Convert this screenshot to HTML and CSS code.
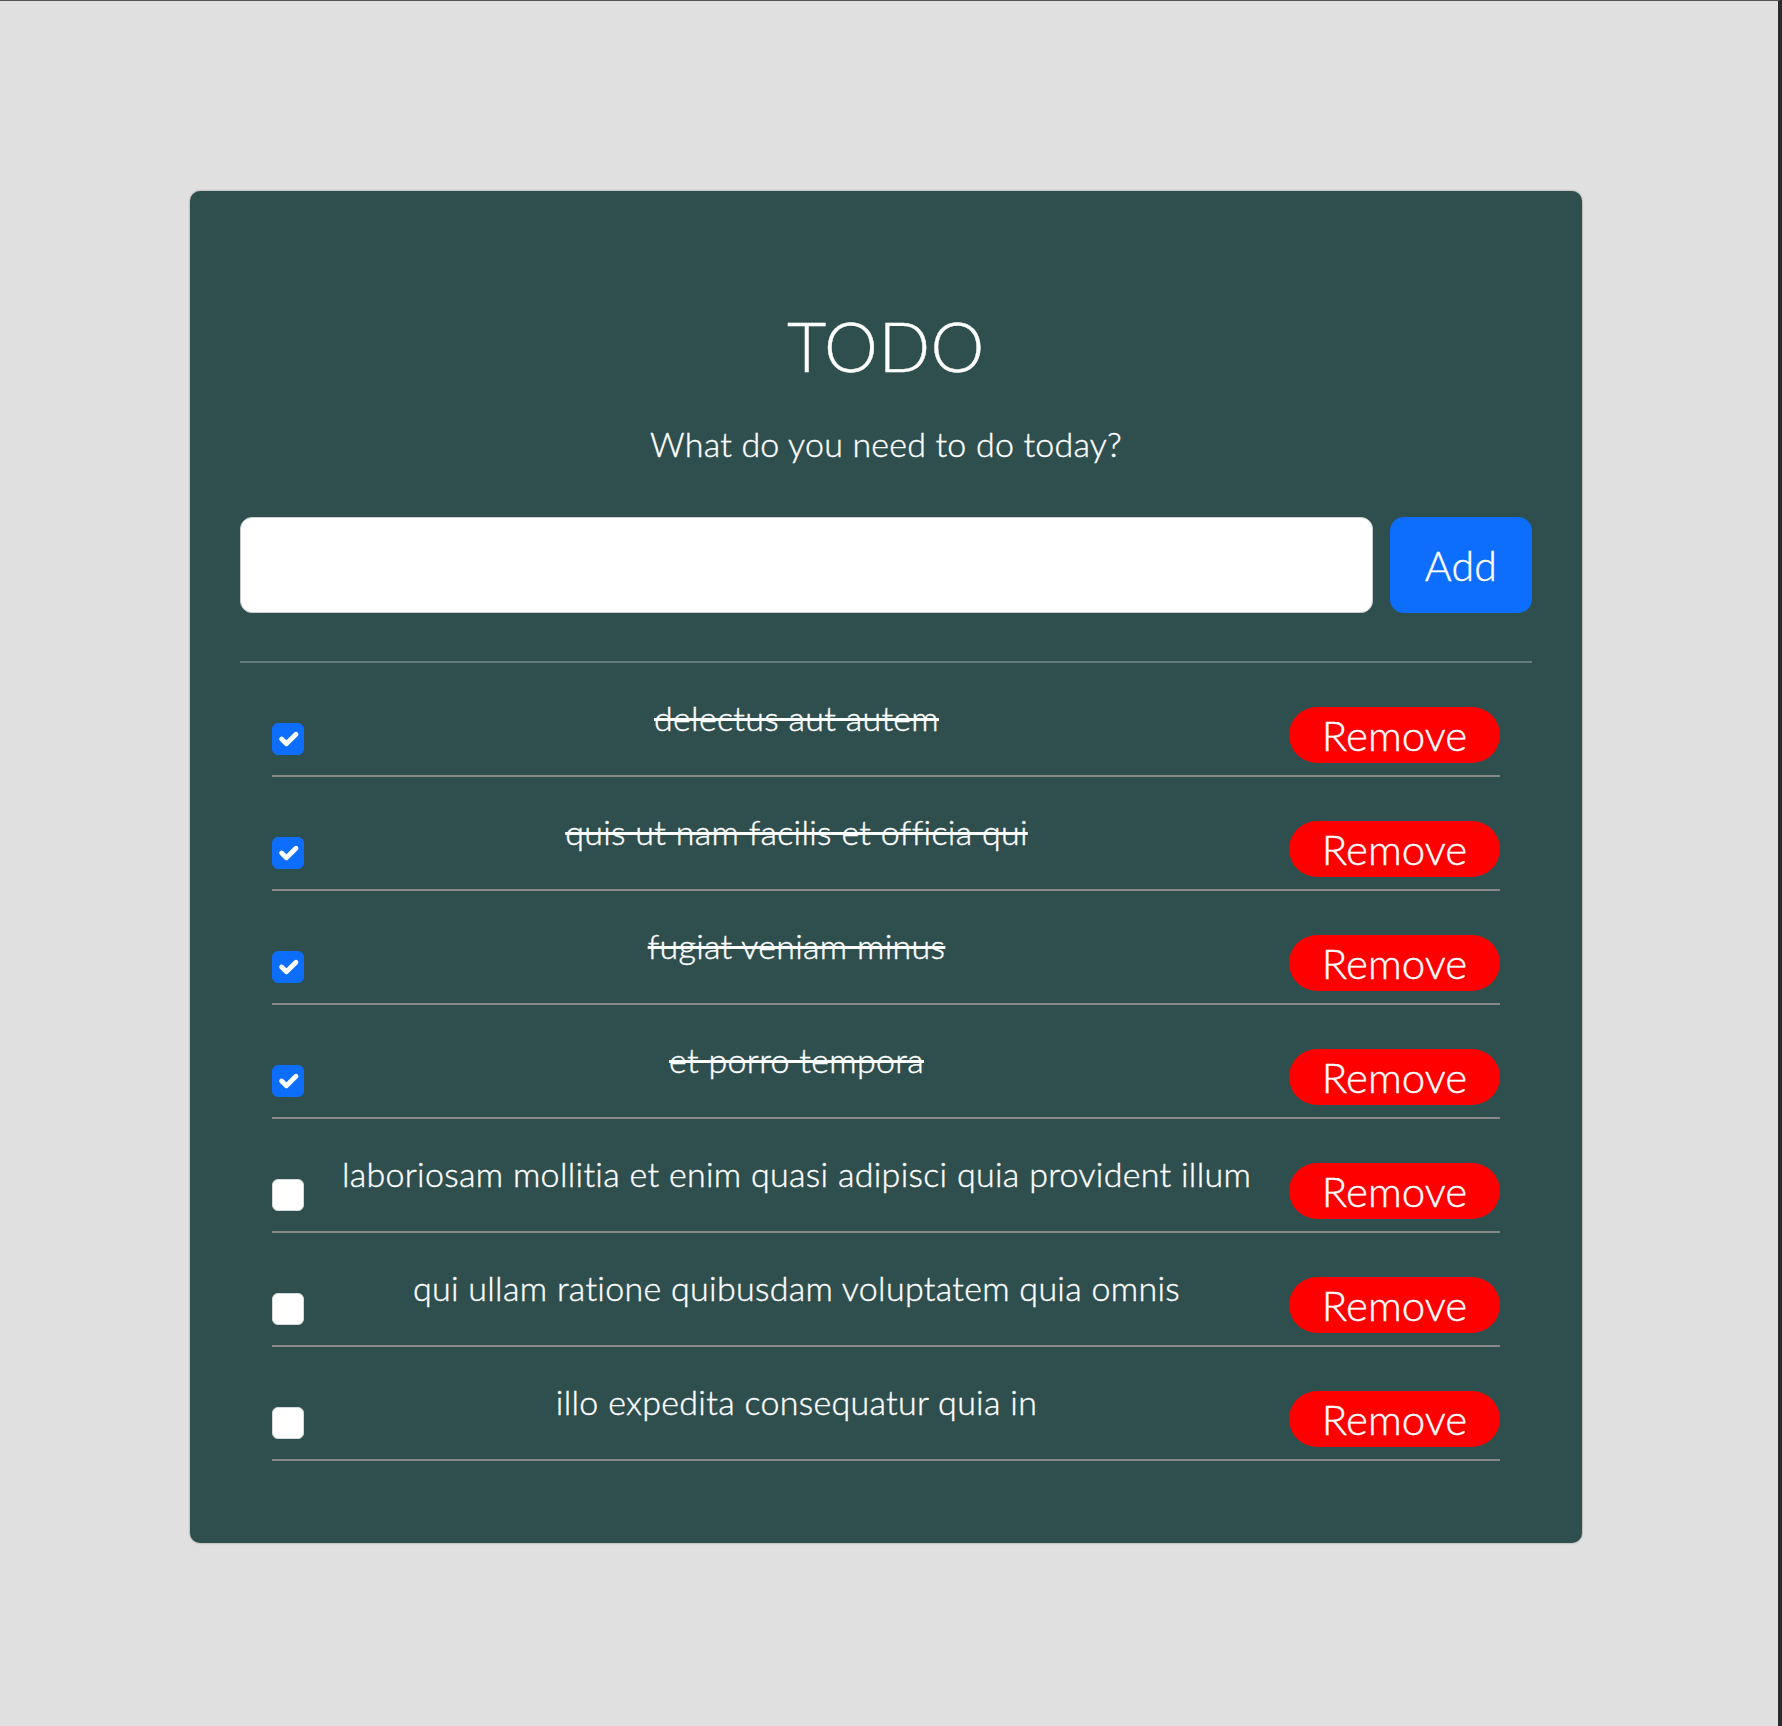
FILE: index.html
```html
<!DOCTYPE html>
<html lang="en">
<head>
<meta charset="utf-8">
<title>TODO</title>
<link rel="stylesheet" href="styles.css">
</head>
<body>
<main class="card">
  <h1 class="title">TODO</h1>
  <p class="subtitle">What do you need to do today?</p>
  <form class="add-form">
    <input class="add-input" type="text" aria-label="New todo">
    <button class="add-btn" type="button">Add</button>
  </form>
  <hr class="divider">
  <ul class="list">
    <li class="item done">
      <span class="box checked"><svg viewBox="0 0 20 20" width="32" height="32"><path d="m6 10 3 3 6-6" fill="none" stroke="#fff" stroke-width="3" stroke-linecap="round" stroke-linejoin="round"/></svg></span>
      <span class="text">delectus aut autem</span>
      <button class="remove" type="button">Remove</button>
    </li>
    <li class="item done">
      <span class="box checked"><svg viewBox="0 0 20 20" width="32" height="32"><path d="m6 10 3 3 6-6" fill="none" stroke="#fff" stroke-width="3" stroke-linecap="round" stroke-linejoin="round"/></svg></span>
      <span class="text">quis ut nam facilis et officia qui</span>
      <button class="remove" type="button">Remove</button>
    </li>
    <li class="item done">
      <span class="box checked"><svg viewBox="0 0 20 20" width="32" height="32"><path d="m6 10 3 3 6-6" fill="none" stroke="#fff" stroke-width="3" stroke-linecap="round" stroke-linejoin="round"/></svg></span>
      <span class="text">fugiat veniam minus</span>
      <button class="remove" type="button">Remove</button>
    </li>
    <li class="item done">
      <span class="box checked"><svg viewBox="0 0 20 20" width="32" height="32"><path d="m6 10 3 3 6-6" fill="none" stroke="#fff" stroke-width="3" stroke-linecap="round" stroke-linejoin="round"/></svg></span>
      <span class="text">et porro tempora</span>
      <button class="remove" type="button">Remove</button>
    </li>
    <li class="item">
      <span class="box"></span>
      <span class="text">laboriosam mollitia et enim quasi adipisci quia provident illum</span>
      <button class="remove" type="button">Remove</button>
    </li>
    <li class="item">
      <span class="box"></span>
      <span class="text">qui ullam ratione quibusdam voluptatem quia omnis</span>
      <button class="remove" type="button">Remove</button>
    </li>
    <li class="item">
      <span class="box"></span>
      <span class="text">illo expedita consequatur quia in</span>
      <button class="remove" type="button">Remove</button>
    </li>
  </ul>
</main>
</body>
</html>
```

FILE: styles.css
```css
* { box-sizing: border-box; }

html {
  background: #e0e0e0;
}

body {
  margin: 0;
  min-height: 100vh;
  border-top: 1px solid #555;
  border-right: 4px solid #2b2b2b;
  font-family: "Lato", "Open Sans", sans-serif;
  font-weight: 300;
  color: #fff;
  -webkit-text-stroke: 0.4px currentColor;
  padding: 190px 0 183px 190px;
}

.card {
  width: 1392px;
  background: #2f4f4f;
  border-radius: 10px;
  box-shadow: 0 0 2px rgba(0, 0, 0, 0.45);
  padding: 114px 50px 82px;
}

.title {
  margin: 0;
  font-size: 68px;
  font-weight: 300;
  line-height: 1.2;
  letter-spacing: 0.5px;
  text-align: center;
}

.subtitle {
  margin: 37px 0 0;
  font-size: 34px;
  line-height: 1.2;
  letter-spacing: 0.2px;
  text-align: center;
}

.add-form {
  display: flex;
  gap: 17px;
  margin-top: 53px;
  height: 96px;
}

.add-input {
  flex: 1;
  height: 96px;
  border: 1px solid #c9cdd1;
  border-radius: 12px;
  background: #fff;
  font-family: inherit;
  font-size: 32px;
  padding: 0 20px;
}

.add-btn {
  width: 142px;
  height: 96px;
  border: none;
  border-radius: 14px;
  background: #0d6efd;
  color: #fff;
  font-family: inherit;
  font-weight: 300;
  font-size: 41px;
  letter-spacing: 0.3px;
  padding: 0;
}

.divider {
  margin: 48px 0 0;
  border: none;
  border-top: 2px solid rgba(255, 255, 255, 0.25);
}

.list {
  list-style: none;
  margin: 0 32px;
  padding: 0;
}

.item {
  display: flex;
  align-items: flex-start;
  padding: 35px 0 12px;
  border-bottom: 2px solid #888;
}

.box {
  flex: none;
  width: 32px;
  height: 32px;
  margin-top: 25px;
  border-radius: 6px;
  background: #fff;
  border: 1px solid #d4d8dc;
  display: block;
}

.box svg {
  display: block;
  margin: -1px;
}

.box.checked {
  background: #0d6efd;
  border-color: #0d6efd;
}

.text {
  flex: 1;
  text-align: center;
  font-size: 34px;
  line-height: 1.2;
  letter-spacing: 0.3px;
  padding: 0 10px;
}

.done .text {
  text-decoration: line-through;
}

.remove {
  flex: none;
  margin-top: 9px;
  width: 211px;
  height: 56px;
  border: none;
  border-radius: 28px;
  background: #ff0000;
  color: #fff;
  font-family: inherit;
  font-weight: 300;
  font-size: 42px;
  line-height: 1;
  padding: 0;
}
```
